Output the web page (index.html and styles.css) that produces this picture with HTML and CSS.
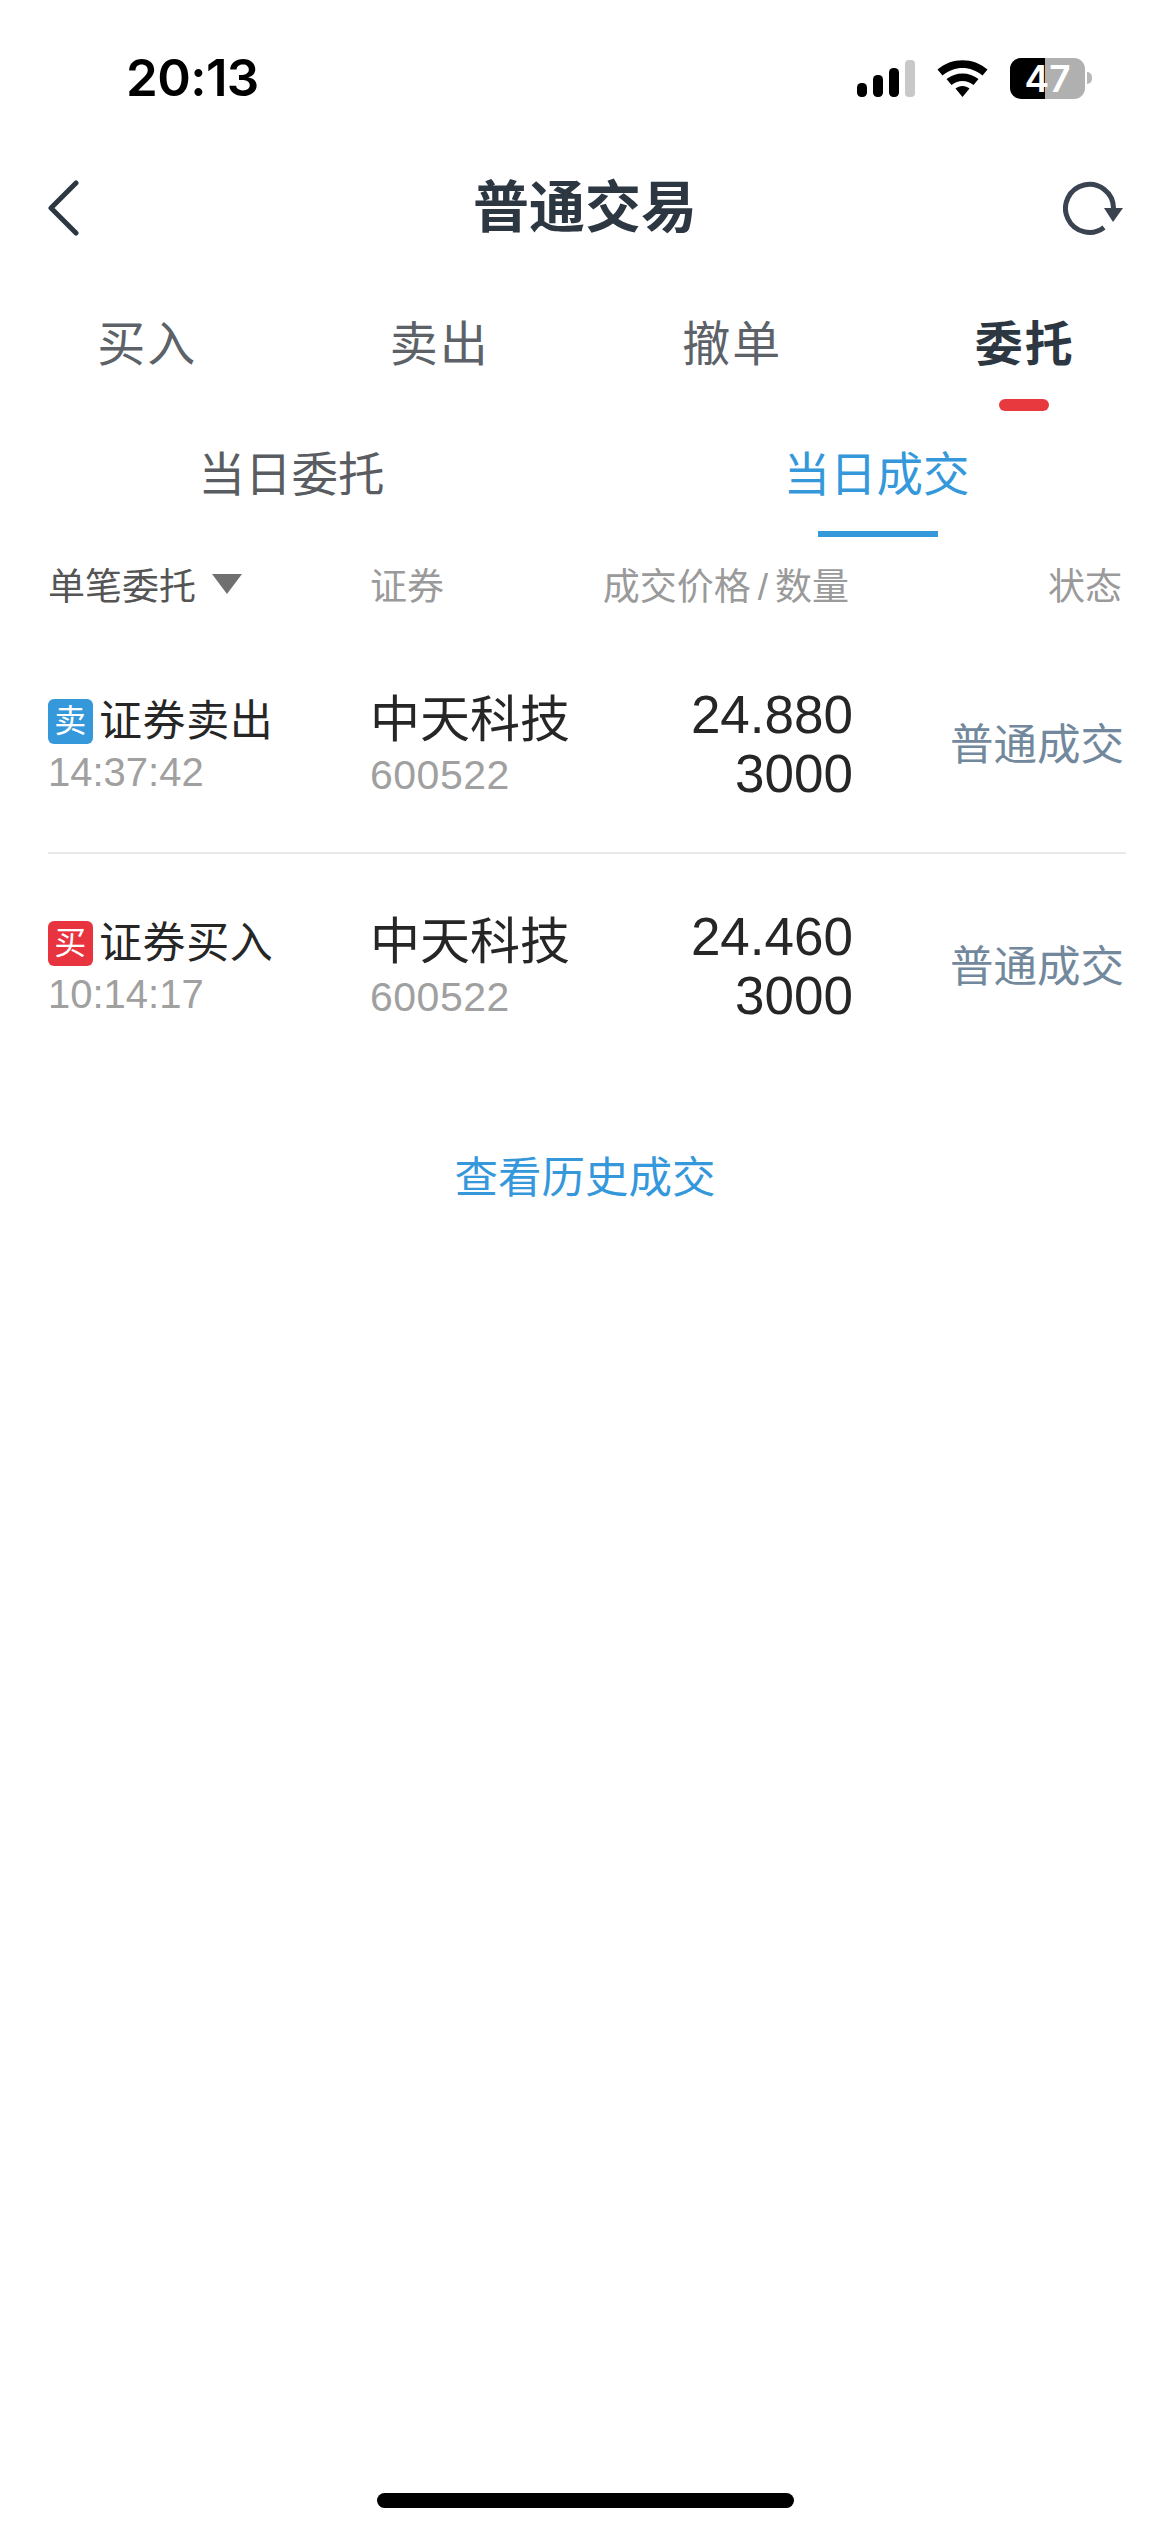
FILE: index.html
```html
<!DOCTYPE html>
<html lang="zh-CN">
<head>
<meta charset="utf-8">
<title>普通交易</title>
<link rel="stylesheet" href="styles.css">
</head>
<body>
<div class="screen">
  <div class="status">
    <span class="clock">20:13</span>
    <div class="status-icons">
      <svg class="signal" width="58" height="37" viewBox="0 0 58 37"><rect x="0" y="23" width="10" height="14" rx="4.5" fill="#000"/><rect x="16" y="15" width="10" height="22" rx="4.5" fill="#000"/><rect x="32" y="8" width="10" height="29" rx="4.5" fill="#000"/><rect x="48" y="0" width="10" height="37" rx="4" fill="#c8c8c8"/></svg>
      <svg class="wifi" width="51" height="37" viewBox="0 0 50 37"><path d="M0 9.500C14-3 36-3 50 9.500L45 15.500C33 5.500 17 5.500 5 15.500Z" fill="#000"/><path d="M9 19C18 11.500 32 11.500 41 19L36 25C29 19.500 21 19.500 14 25Z" fill="#000"/><path d="M18 28.500C22 25 28 25 32 28.500L25 37Z" fill="#000"/></svg>
      <div class="battery"><span class="battery-num">47</span></div>
      <span class="battery-cap"></span>
    </div>
  </div>
  <header class="nav">
    <svg class="back" width="32" height="56" viewBox="0 0 32 56"><path d="M29 3 4 28 29 53" fill="none" stroke="#2d3742" stroke-width="5" stroke-linecap="round" stroke-linejoin="round"/></svg>
    <h1 class="title">普通交易</h1>
    <svg class="refresh" width="60" height="54" viewBox="0 0 60 54"><path d="M41 46.500A24 24 0 1 1 50.500 27" fill="none" stroke="#3b4350" stroke-width="5"/><path d="M41 27H60L50 41Z" fill="#3b4350"/></svg>
  </header>
  <nav class="tabs">
    <div class="tab">买入</div>
    <div class="tab">卖出</div>
    <div class="tab">撤单</div>
    <div class="tab active">委托</div>
  </nav>
  <nav class="subtabs">
    <div class="subtab">当日委托</div>
    <div class="subtab active">当日成交</div>
  </nav>
  <div class="head">
    <div class="col-a head-filter">单笔委托<span class="tri"></span></div>
    <div class="col-b">证券</div>
    <div class="col-c head-price">成交价格<span class="slash">/</span>数量</div>
    <div class="col-d">状态</div>
  </div>
  <div class="row row-first">
    <div class="col-a">
      <div class="kind"><span class="badge sell">卖</span>证券卖出</div>
      <div class="sub">14:37:42</div>
    </div>
    <div class="col-b">
      <div class="name">中天科技</div>
      <div class="code">600522</div>
    </div>
    <div class="col-c nums"><div>24.880</div><div>3000</div></div>
    <div class="col-d state">普通成交</div>
  </div>
  <div class="row">
    <div class="col-a">
      <div class="kind"><span class="badge buy">买</span>证券买入</div>
      <div class="sub">10:14:17</div>
    </div>
    <div class="col-b">
      <div class="name">中天科技</div>
      <div class="code">600522</div>
    </div>
    <div class="col-c nums"><div>24.460</div><div>3000</div></div>
    <div class="col-d state">普通成交</div>
  </div>
  <div class="history">查看历史成交</div>
  <div class="home"></div>
</div>
</body>
</html>
```
FILE: styles.css
```css
* { box-sizing: border-box; }
html, body { margin: 0; padding: 0; background: #fff; }
body { font-family: "Liberation Sans", "Noto Sans CJK SC", sans-serif; }
.screen { width: 1170px; height: 2532px; display: flex; flex-direction: column; overflow: hidden; }

.status { height: 150px; padding: 52px 0 0 126px; display: flex; justify-content: space-between; align-items: flex-start; }
.clock { font-family: "Inter", sans-serif; font-weight: 600; font-size: 51px; line-height: 52px; color: #000; letter-spacing: -0.6px; }
.status-icons { display: flex; align-items: center; margin: 5px 78px 0 0; height: 42px; }
.wifi { margin-left: 22px; }
.battery { width: 75px; height: 41px; margin-left: 22px; border-radius: 11px; background: linear-gradient(90deg, #000 0 47%, #b0b0b0 47% 100%); display: flex; align-items: center; justify-content: center; }
.battery-num { font-family: "Inter", sans-serif; font-weight: 600; font-size: 37px; color: #fff; line-height: 1; }
.battery-cap { width: 5px; height: 12px; background: #b8b8b8; border-radius: 0 6px 6px 0; margin-left: 2px; }

.nav { height: 116px; padding: 0 47px 0 47px; display: grid; grid-template-columns: 1fr auto 1fr; align-items: center; }
.refresh { justify-self: end; }
.title { margin: 0; font-size: 56px; font-weight: 700; color: #2d3742; line-height: 1; }

.tabs { height: 155px; display: grid; grid-template-columns: repeat(4, 292.5px); }
.tab { text-align: center; font-size: 48px; line-height: 64px; padding: 47px 0 0 2px; color: #5c6268; letter-spacing: 2px; }
.tab.active { color: #2d3742; font-weight: 700; position: relative; }
.tab.active::after { content: ""; position: absolute; left: calc(50% - 25px); top: 133px; width: 50px; height: 12px; border-radius: 6px; background: #e83a3e; }

.subtabs { height: 116px; display: grid; grid-template-columns: 583px 587px; }
.subtab { text-align: center; font-size: 46.500px; line-height: 64px; color: #595c60; position: relative; padding-top: 22px; }
.subtab.active { color: #3498db; }
.subtab.active::after { content: ""; position: absolute; left: 235px; top: 110px; width: 120px; height: 6px; background: #3498db; }

.head { height: 94px; margin-bottom: 2px; padding: 0 48px 0 48px; display: flex; align-items: center; font-size: 37px; color: #9a9a9a; }
.col-a { width: 322px; flex: none; }
.col-b { width: 222px; flex: none; }
.col-c { width: 261px; flex: none; text-align: right; }
.col-d { flex: 1; text-align: right; }
.head-filter { color: #555; display: flex; align-items: center; }
.head-price { padding-right: 4px; white-space: nowrap; }
.slash { margin: 0 7px; }
.tri { width: 0; height: 0; margin-left: 16px; border-left: 15px solid transparent; border-right: 15px solid transparent; border-top: 20px solid #707070; }

.row { height: 222px; padding: 0 46px 0 48px; display: flex; align-items: center; }
.row-first { position: relative; }
.row-first::after { content: ""; position: absolute; left: 48px; right: 44px; bottom: 1px; height: 2px; background: #e8e8e8; }
.kind { font-size: 43px; line-height: 56px; padding-top: 1px; color: #262626; letter-spacing: 0.6px; display: flex; align-items: center; }
.badge { width: 45px; height: 45px; border-radius: 6px; margin-right: 6px; font-size: 32px; line-height: 45px; text-align: center; color: #fff; }
.badge.sell { background: #3498db; }
.badge.buy { background: #e8343f; }
.sub { font-size: 40px; line-height: 47px; color: #a0a0a0; }
.name { font-size: 50px; line-height: 61px; color: #262626; white-space: nowrap; }
.code { font-size: 41px; line-height: 48px; color: #a0a0a0; letter-spacing: 0.5px; }
.nums { font-size: 53px; line-height: 59px; color: #262626; }
.state { font-size: 43.500px; color: #72889c; white-space: nowrap; padding-bottom: 6px; }

.history { text-align: center; font-size: 43.500px; color: #3498db; margin-top: 71px; line-height: 60px; }
.home { flex: none; width: 417px; height: 15px; margin: auto 0 24px 377px; border-radius: 8px; background: #000; }
```
